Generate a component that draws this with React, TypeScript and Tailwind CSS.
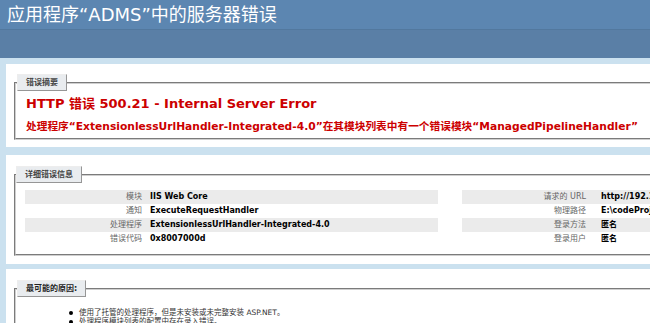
const font = { fontFamily: '"DejaVu Sans", "Noto Sans CJK SC", sans-serif' };

const leftRows = [
  ['模块', 'IIS Web Core'],
  ['通知', 'ExecuteRequestHandler'],
  ['处理程序', 'ExtensionlessUrlHandler-Integrated-4.0'],
  ['错误代码', '0x8007000d'],
];

const rightRows = [
  ['请求的 URL', 'http://192.168.1.100:80/'],
  ['物理路径', 'E:\\codeProject\\ADMS'],
  ['登录方法', '匿名'],
  ['登录用户', '匿名'],
];

function Legend({ children, dark }: { children: React.ReactNode; dark?: boolean }) {
  return (
    <legend
      className={`ml-[-9px] h-[17px] pl-[8px] pr-[8px] border border-t-[#EDEDED] border-l-[#EDEDED] border-r-[#969696] border-b-[#969696] bg-[#E9ECEF] font-bold leading-[15px] ${
        dark ? 'text-[8px] text-[#222]' : 'text-[8px] text-[#444]'
      }`}
    >
      {children}
    </legend>
  );
}

function InfoTable({ rows, labelW, gap }: { rows: string[][]; labelW: string; gap: string }) {
  return (
    <div className="flex flex-col">
      {rows.map(([k, v], i) => (
        <div key={k} className={`flex h-[14px] items-center ${i % 2 === 0 ? 'bg-[#EBEBEB]' : 'bg-white'}`}>
          <div className={`${labelW} shrink-0 text-right text-[8px] text-[#666]`}>{k}</div>
          <div className={`${gap} whitespace-nowrap text-[8px] font-bold text-black`}>{v}</div>
        </div>
      ))}
    </div>
  );
}

export default function App() {
  return (
    <div className="w-[650px] h-[323px] overflow-hidden bg-[#CBE1EF]" style={font}>
      <div className="w-[1000px]">
        {/* header */}
        <div className="h-[30px] bg-[#5C86B1] border-b border-[#52789e] pl-[7px] flex items-center">
          <h1 className="text-[18px] leading-none text-white whitespace-nowrap">应用程序“ADMS”中的服务器错误</h1>
        </div>
        <div className="h-[28px] bg-[#5A7FA6]" />

        <div className="pl-[6px] pt-[6px] flex flex-col">
          {/* summary */}
          <div className="bg-white pt-[10px] pl-[8px] pb-[7px]">
            <fieldset className="border-2 border-r-0 border-[#cfcfcf] [border-style:groove] pl-[10px] pb-[4px]">
              <Legend>错误摘要</Legend>
              <h2 className="mt-[5px] text-[13px] leading-[16px] font-bold text-[#CC0000] whitespace-nowrap">
                HTTP 错误 500.21 - Internal Server Error
              </h2>
              <h3 className="mt-[8px] text-[10.7px] leading-[14px] font-bold text-[#CC0000] whitespace-nowrap">
                处理程序“ExtensionlessUrlHandler-Integrated-4.0”在其模块列表中有一个错误模块“ManagedPipelineHandler”
              </h3>
            </fieldset>
          </div>

          {/* details */}
          <div className="mt-[8px] bg-white pt-[11px] pl-[8px] pb-[8px]">
            <fieldset className="border-2 border-r-0 border-[#cfcfcf] [border-style:groove] pl-[9px] pb-[8px]">
              <Legend>详细错误信息</Legend>
              <div className="mt-[7px] flex gap-[24px]">
                <div className="w-[413px]">
                  <InfoTable rows={leftRows} labelW="w-[117px]" gap="pl-[8px]" />
                </div>
                <div className="w-[500px]">
                  <InfoTable rows={rightRows} labelW="w-[124px]" gap="pl-[15px]" />
                </div>
              </div>
            </fieldset>
          </div>

          {/* causes */}
          <div className="mt-[5px] bg-white pt-[11px] pl-[8px] pb-[8px]">
            <fieldset className="border-2 border-r-0 border-[#cfcfcf] [border-style:groove] pl-[10px] pb-[7px]">
              <Legend dark>最可能的原因:</Legend>
              <ul className="mt-[11px] pl-[43px] text-[7.5px] leading-[9px] text-[#333]">
                <li className="flex items-center gap-[6px]">
                  <span className="w-[4px] h-[4px] rounded-full bg-black" />
                  使用了托管的处理程序，但是未安装或未完整安装 ASP.NET。
                </li>
                <li className="flex items-center gap-[6px]">
                  <span className="w-[4px] h-[4px] rounded-full bg-black" />
                  处理程序模块列表的配置中存在录入错误。
                </li>
              </ul>
            </fieldset>
          </div>
        </div>
      </div>
    </div>
  );
}
